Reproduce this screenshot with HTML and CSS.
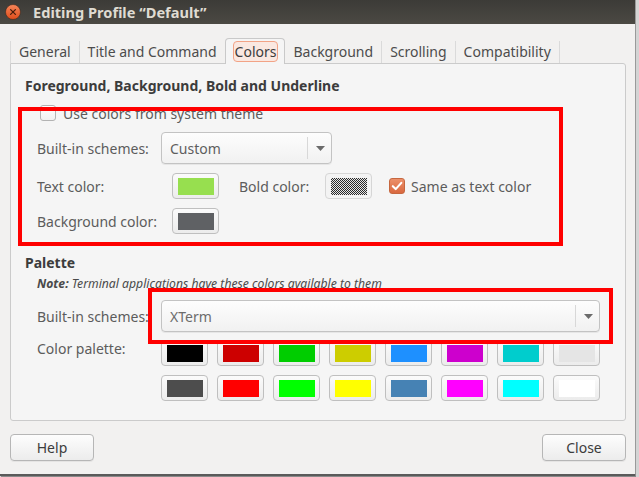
FILE: index.html
```html
<!DOCTYPE html>
<html>
<head>
<meta charset="utf-8">
<title>Editing Profile</title>
<link rel="stylesheet" href="styles.css">
</head>
<body>
<div class="window">
  <header class="titlebar">
    <svg class="close" width="16" height="16" viewBox="0 0 16 16">
      <defs>
        <linearGradient id="cg" x1="0" y1="0" x2="0" y2="1">
          <stop offset="0" stop-color="#f6865a"/>
          <stop offset="1" stop-color="#df4c1a"/>
        </linearGradient>
      </defs>
      <circle cx="8" cy="8" r="7.5" fill="url(#cg)" stroke="#3a2a20" stroke-width="0.6"/>
      <path d="M5.6 5.6 L10.4 10.4 M10.4 5.6 L5.6 10.4" stroke="#4a1e0c" stroke-width="1.3" stroke-linecap="round"/>
    </svg>
    <span class="title">Editing Profile “Default”</span>
  </header>

  <main class="content">
    <nav class="tabs">
      <div class="tab">General</div>
      <div class="tab">Title and Command</div>
      <div class="tab active"><span class="focus">Colors</span></div>
      <div class="tab">Background</div>
      <div class="tab">Scrolling</div>
      <div class="tab last">Compatibility</div>
    </nav>

    <section class="panel">
      <h2 class="heading">Foreground, Background, Bold and Underline</h2>
      <div class="group">
        <div class="check-row">
          <span class="checkbox"></span>
          <span class="label">Use colors from system theme</span>
        </div>
        <div class="row row-combo">
          <span class="label label-combo">Built-in schemes:</span>
          <div class="combo combo-small">
            <span class="combo-text">Custom</span>
            <span class="combo-arrow">
              <svg width="9" height="5" viewBox="0 0 9 5"><polygon points="0,0 9,0 4.5,5" fill="#6b6b6b"/></svg>
            </span>
          </div>
        </div>
        <div class="row row-color">
          <span class="label label-color">Text color:</span>
          <span class="color-btn"><span class="swatch swatch-text"></span></span>
          <span class="label label-bold">Bold color:</span>
          <span class="color-btn disabled"><span class="swatch swatch-checker"></span></span>
          <span class="checkbox checked">
            <svg width="16" height="16" viewBox="0 0 16 16"><path d="M3.8 8.2 L6.7 11.1 L12.3 4.9" fill="none" stroke="#fff" stroke-width="2.1" stroke-linecap="round" stroke-linejoin="round"/></svg>
          </span>
          <span class="label">Same as text color</span>
        </div>
        <div class="row row-color row-bg">
          <span class="label label-color">Background color:</span>
          <span class="color-btn"><span class="swatch swatch-bg"></span></span>
        </div>
      </div>

      <h2 class="heading heading-palette">Palette</h2>
      <div class="group">
        <p class="note"><b>Note:</b> Terminal applications have these colors available to them</p>
        <div class="row row-combo row-combo2">
          <span class="label label-combo">Built-in schemes:</span>
          <div class="combo combo-wide">
            <span class="combo-text combo-text-light">XTerm</span>
            <span class="combo-arrow">
              <svg width="9" height="5" viewBox="0 0 9 5"><polygon points="0,0 9,0 4.5,5" fill="#6b6b6b"/></svg>
            </span>
          </div>
        </div>
        <div class="row row-palette">
          <span class="label label-combo label-top">Color palette:</span>
          <div class="palette">
            <span class="color-btn"><span class="swatch" style="background:#000000"></span></span>
            <span class="color-btn"><span class="swatch" style="background:#cd0000"></span></span>
            <span class="color-btn"><span class="swatch" style="background:#00cd00"></span></span>
            <span class="color-btn"><span class="swatch" style="background:#cdcd00"></span></span>
            <span class="color-btn"><span class="swatch" style="background:#1e90ff"></span></span>
            <span class="color-btn"><span class="swatch" style="background:#cd00cd"></span></span>
            <span class="color-btn"><span class="swatch" style="background:#00cdcd"></span></span>
            <span class="color-btn"><span class="swatch" style="background:#e5e5e5"></span></span>
            <span class="color-btn"><span class="swatch" style="background:#4d4d4d"></span></span>
            <span class="color-btn"><span class="swatch" style="background:#ff0000"></span></span>
            <span class="color-btn"><span class="swatch" style="background:#00ff00"></span></span>
            <span class="color-btn"><span class="swatch" style="background:#ffff00"></span></span>
            <span class="color-btn"><span class="swatch" style="background:#4682b4"></span></span>
            <span class="color-btn"><span class="swatch" style="background:#ff00ff"></span></span>
            <span class="color-btn"><span class="swatch" style="background:#00ffff"></span></span>
            <span class="color-btn"><span class="swatch" style="background:#ffffff"></span></span>
          </div>
        </div>
      </div>
    </section>

    <footer class="buttons">
      <button class="btn">Help</button>
      <button class="btn">Close</button>
    </footer>
  </main>

  <div class="highlight highlight-one"></div>
  <div class="highlight highlight-two"></div>
</div>
</body>
</html>
```

FILE: styles.css
```css
* { box-sizing: border-box; }

html, body {
  margin: 0;
  padding: 0;
}

body {
  width: 639px;
  height: 477px;
  overflow: hidden;
  background: #d4d4d4;
  font-family: "Noto Sans", "Open Sans", "DejaVu Sans", sans-serif;
  font-size: 14px;
  color: #4c4c4c;
}

.window {
  position: relative;
  width: 635px;
  height: 474px;
  background: #f2f1f0;
  box-shadow: 0 2px 0 #5a5a5a, 1px 0 0 #9a9a9a, 1px 3px 0 #8a8a8a;
  display: flex;
  flex-direction: column;
}

/* ---------- Title bar ---------- */
.titlebar {
  height: 24px;
  flex: none;
  display: flex;
  align-items: center;
  padding-left: 5px;
  gap: 12px;
  background: linear-gradient(to bottom, #3c3b37, #4b4943);
}

.close { display: block; }

.title {
  color: #dfdbd2;
  font-weight: bold;
  font-size: 14.6px;
  line-height: 24px;
  white-space: nowrap;
}

/* ---------- Content ---------- */
.content {
  flex: 1;
  padding: 14px 9px 0 10px;
  display: flex;
  flex-direction: column;
}

/* ---------- Tabs ---------- */
.tabs {
  height: 25px;
  display: flex;
  align-items: flex-end;
  position: relative;
  z-index: 1;
}

.tab {
  height: 22px;
  line-height: 21px;
  padding: 0 8px;
  border-left: 1px solid #dadada;
  color: #4c4c4c;
  white-space: nowrap;
}

.tab.last { border-right: 1px solid #dadada; }

.tab.active {
  height: 26px;
  margin-bottom: -1px;
  padding: 2px 6px 0 7px;
  background: #f5f5f5;
  border: 1px solid #c9c9c9;
  border-bottom: none;
  border-radius: 4px 4px 0 0;
}

.tab.active + .tab { border-left: none; }

.focus {
  display: block;
  height: 21px;
  line-height: 19px;
  padding: 0 1px;
  border: 1px solid #f2a386;
  border-radius: 4px;
  background: #fae8e1;
  color: #3c3c3c;
}

/* ---------- Panel ---------- */
.panel {
  height: 358px;
  flex: none;
  background: #f5f5f5;
  border: 1px solid #cbcbcb;
  border-radius: 0 3px 3px 3px;
  padding: 13px 0 0 14px;
}

.heading {
  margin: 0;
  font-size: 14px;
  line-height: 17px;
  font-weight: bold;
  color: #3c3c3c;
}

.heading-palette { margin-top: 20px; }

.group { margin-left: 12px; }

.label {
  color: #5c5c5c;
  white-space: nowrap;
}

.check-row {
  margin-top: 11px;
  height: 16px;
  display: flex;
  align-items: center;
  gap: 7px;
  padding-left: 3px;
}

.checkbox {
  width: 16px;
  height: 16px;
  flex: none;
  border: 1px solid #b3b3b3;
  border-radius: 3px;
  background: linear-gradient(to bottom, #ffffff, #f1f1f1);
}

.checkbox.checked {
  border-color: #c6673f;
  background: linear-gradient(to bottom, #ec906a, #d9683f);
  margin-left: 17px;
  margin-right: 6px;
  position: relative;
}

.checkbox.checked svg {
  position: absolute;
  left: -1px;
  top: -1px;
}

.row {
  display: flex;
  align-items: center;
}

.row-combo { margin-top: 11px; height: 32px; }
.row-color { margin-top: 9px; height: 26px; }

.label-combo { width: 124px; flex: none; }
.label-color { width: 135px; flex: none; }
.label-bold { width: 86px; flex: none; margin-left: 20px; }

.combo {
  height: 32px;
  display: flex;
  align-items: center;
  border: 1px solid #c3c3c3;
  border-radius: 4px;
  background: linear-gradient(to bottom, #fdfdfd, #f1f1f1);
  box-shadow: 0 1px 0 rgba(0, 0, 0, 0.06);
}

.combo-small { width: 171px; }
.combo-wide { width: 439px; }

.combo-text {
  flex: 1;
  padding-left: 8px;
  color: #5e5e5e;
}

.combo-text-light { color: #6c6c6c; }

.combo-arrow {
  width: 24px;
  height: 22px;
  border-left: 1px solid #d8d8d8;
  display: flex;
  align-items: center;
  justify-content: center;
}

.combo-arrow svg { display: block; margin-left: 1px; }

.color-btn {
  width: 47px;
  height: 26px;
  flex: none;
  padding: 4px 0 0 5px;
  border: 1px solid #bfbfbf;
  border-radius: 4px;
  background: linear-gradient(to bottom, #fbfbfb, #ececec);
}

.color-btn.disabled {
  border-color: #d6d6d6;
  background: #f3f3f3;
}

.swatch {
  display: block;
  width: 36px;
  height: 17px;
}

.swatch-text { background: #97df4f; }
.swatch-bg { background: #5f6164; }
.swatch-checker {
  background: repeating-conic-gradient(#2a2a2a 0 25%, #e6e6e6 0 50%) 0 0 / 2px 2px;
}

/* ---------- Palette section ---------- */
.note {
  margin: 4px 0 0;
  font-size: 12.2px;
  line-height: 17px;
  font-style: italic;
  color: #4a4a4a;
}

.row-combo2 { margin-top: 8px; }

.row-palette {
  margin-top: 8px;
  align-items: flex-start;
}

.label-top { margin-top: 0; line-height: 17px; }

.palette {
  display: grid;
  grid-template-columns: repeat(8, 47px);
  grid-auto-rows: 26px;
  column-gap: 9px;
  row-gap: 9px;
}

/* ---------- Buttons ---------- */
.buttons {
  margin-top: 13px;
  display: flex;
  justify-content: space-between;
}

.btn {
  width: 84px;
  height: 27px;
  padding: 0;
  font-family: inherit;
  font-size: 14px;
  color: #3c3c3c;
  border: 1px solid #b6b6b6;
  border-radius: 4px;
  background: linear-gradient(to bottom, #fdfdfd, #ececec);
  box-shadow: 0 1px 0 rgba(0, 0, 0, 0.05);
}

/* ---------- Annotation overlays ---------- */
.highlight {
  position: absolute;
  border: 4px solid #ff0000;
  pointer-events: none;
}

.highlight-one {
  left: 18px;
  top: 107px;
  width: 545px;
  height: 139px;
}

.highlight-two {
  left: 148px;
  top: 288px;
  width: 465px;
  height: 56px;
}
```
